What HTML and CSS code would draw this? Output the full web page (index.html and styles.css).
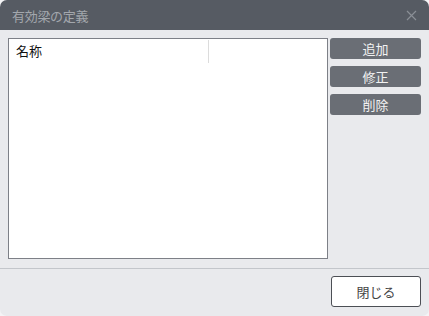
FILE: index.html
```html
<!DOCTYPE html>
<html lang="ja">
<head>
  <meta charset="UTF-8" />
  <title>有効梁の定義</title>
  <link rel="stylesheet" href="styles.css">
</head>
<body>
  <div class="dialog">
    <!-- TITLE BAR -->
    <div class="titlebar">
      <span class="title">有効梁の定義</span>
      <svg class="close-x" width="11" height="11" viewBox="0 0 11 11">
        <path d="M1 1 L10 10 M10 1 L1 10" stroke="#8a8f96" stroke-width="1.2" fill="none"/>
      </svg>
    </div>

    <!-- CONTENT -->
    <div class="content">
      <div class="listbox">
        <div class="list-head">
          <div class="col col-name">名称</div>
          <div class="col col-rest"></div>
        </div>
      </div>
      <div class="side-buttons">
        <button class="btn-dark">追加</button>
        <button class="btn-dark">修正</button>
        <button class="btn-dark">削除</button>
      </div>
    </div>

    <!-- FOOTER -->
    <div class="footer">
      <button class="btn-close">閉じる</button>
    </div>
  </div>
</body>
</html>
```

FILE: styles.css
```css
* {
  box-sizing: border-box;
}

html, body {
  margin: 0;
  padding: 0;
  background: #f4f4f6;
  font-family: "Noto Sans CJK JP", "Noto Sans", sans-serif;
}

.dialog {
  width: 429px;
  height: 316px;
  background: #e9eaed;
  border-radius: 7px;
  overflow: hidden;
  display: flex;
  flex-direction: column;
}

/* TITLE BAR */
.titlebar {
  height: 30px;
  background: #565b63;
  display: flex;
  align-items: center;
  justify-content: space-between;
  padding: 0 12px 0 12px;
}

.title {
  color: #a3a7ad;
  font-size: 13px;
  letter-spacing: -0.3px;
}

.close-x {
  display: block;
}

/* CONTENT */
.content {
  display: flex;
  padding: 8px 8px 0 8px;
  gap: 2px;
}

.listbox {
  width: 320px;
  height: 221px;
  background: #fff;
  border: 1px solid #7d8087;
}

.list-head {
  display: flex;
  height: 24px;
  padding-top: 1px;
}

.col {
  font-size: 13px;
  color: #111;
  line-height: 22px;
}

.col-name {
  width: 200px;
  padding-left: 7px;
  border-right: 1px solid #dcdcdc;
}

.side-buttons {
  display: flex;
  flex-direction: column;
  gap: 7px;
}

.btn-dark {
  width: 91px;
  height: 21px;
  background: #6a6e75;
  color: #f2f2f2;
  border: none;
  border-radius: 3px;
  font-family: inherit;
  font-size: 13px;
  padding: 0;
  line-height: 21px;
}

/* FOOTER */
.footer {
  margin-top: 9px;
  border-top: 1px solid #c3c6cb;
  display: flex;
  justify-content: flex-end;
  padding: 7px 8px 0 0;
}

.btn-close {
  width: 90px;
  height: 31px;
  background: #fff;
  border: 1px solid #4c4f55;
  border-radius: 3px;
  color: #444;
  font-family: inherit;
  font-size: 13px;
  padding: 0;
}
```
